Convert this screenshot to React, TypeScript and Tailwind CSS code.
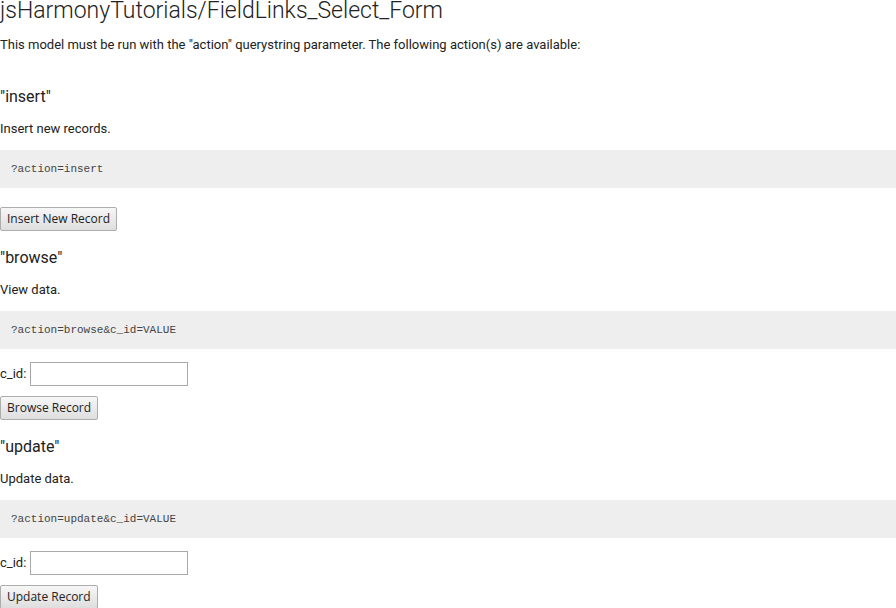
import React from "react";

type Action = {
  name: string;
  desc: string;
  query: string;
  button: string;
  hasId: boolean;
};

const actions: Action[] = [
  { name: "insert", desc: "Insert new records.", query: "?action=insert", button: "Insert New Record", hasId: false },
  { name: "browse", desc: "View data.", query: "?action=browse&c_id=VALUE", button: "Browse Record", hasId: true },
  { name: "update", desc: "Update data.", query: "?action=update&c_id=VALUE", button: "Update Record", hasId: true },
];

const btn =
  "h-[24px] px-[6px] border border-[#adadad] rounded-[2px] bg-gradient-to-b from-[#f7f7f7] to-[#dedede] text-[12px] text-[#222] font-['Open_Sans',sans-serif] leading-none";

export default function App() {
  return (
    <div className="w-[896px] h-[608px] overflow-hidden bg-white text-[#222] font-['Roboto',sans-serif]">
      {/* Header */}
      <h1 className="-mt-[3px] text-[23px] leading-[27px] font-light">jsHarmonyTutorials/FieldLinks_Select_Form</h1>
      <p className="mt-[13px] text-[13px] leading-[16px]">
        This model must be run with the "action" querystring parameter. The following action(s) are available:
      </p>

      {actions.map((a, i) => (
        <div key={a.name} className={i === 0 ? "mt-[34px]" : "mt-[17px]"}>
          <h3 className="text-[16px] leading-[20px] font-normal">"{a.name}"</h3>
          <p className="mt-[14px] text-[13px] leading-[16px]">{a.desc}</p>
          <div className="mt-[13px] h-[38px] flex items-center px-[11px] bg-[#eeeeee] font-['Courier_New','Liberation_Mono',monospace] text-[11px] text-[#444]">
            {a.query}
          </div>
          {a.hasId && (
            <div className="mt-[13px] h-[24px] flex items-center gap-[4px] text-[13px]">
              <span>c_id:</span>
              <input type="text" className="w-[158px] h-[24px] border border-[#a9a9a9] bg-white px-1 outline-none" />
            </div>
          )}
          <button className={`${btn} ${a.hasId ? "mt-[10px]" : "mt-[19px]"} block`}>{a.button}</button>
        </div>
      ))}
    </div>
  );
}
